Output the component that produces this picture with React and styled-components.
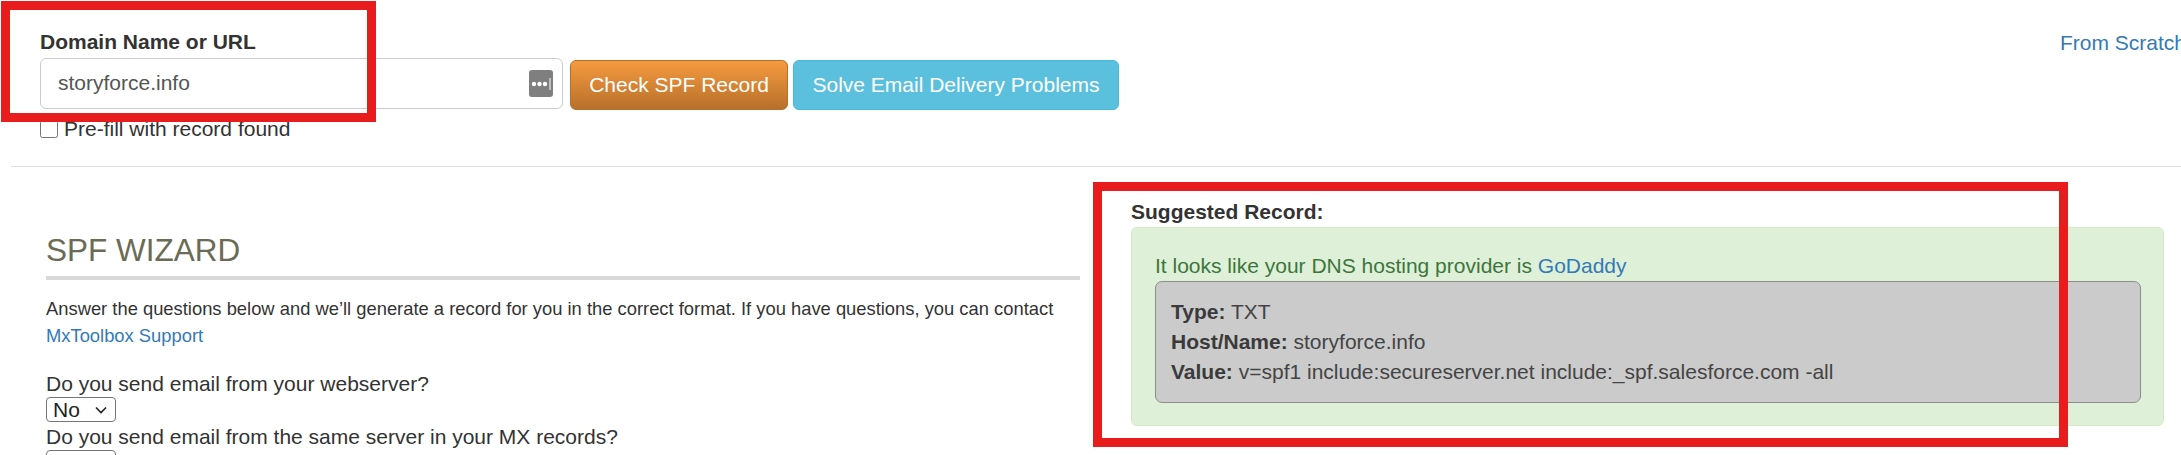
import styled, { createGlobalStyle } from 'styled-components';

const GlobalStyle = createGlobalStyle`
  html, body {
    margin: 0;
    padding: 0;
    background: #fff;
    overflow: hidden;
  }
  body {
    font-family: "Liberation Sans", Arial, sans-serif;
    color: #333;
  }
`;

const Page = styled.div`
  position: relative;
  width: 2181px;
  height: 455px;
  overflow: hidden;
`;

const TopRow = styled.div`
  display: flex;
  align-items: flex-start;
  height: 167px;
  padding: 32px 0 0 29px;
  box-sizing: border-box;
  border-bottom: 1px solid #ddd;
  margin-left: 11px;
`;

const Form = styled.form`
  width: 1079px;
  flex-shrink: 0;
`;

const FieldLabel = styled.label`
  display: block;
  font-size: 21px;
  line-height: 20px;
  font-weight: 700;
  margin-bottom: 6px;
`;

const FieldRow = styled.div`
  display: flex;
  align-items: flex-start;
  gap: 5px;
`;

const InputWrap = styled.div`
  position: relative;
  flex-shrink: 0;
  width: 523px;
  height: 51px;
  margin-right: 2px;
`;

const DomainInput = styled.input`
  width: 100%;
  height: 100%;
  box-sizing: border-box;
  padding: 0 17px 2px;
  border: 1px solid #ccc;
  border-radius: 6px;
  font: 21px "Liberation Sans", Arial, sans-serif;
  color: #555;
  outline: none;
`;

const PasswordIcon = styled.svg`
  position: absolute;
  top: 12px;
  right: 10px;
  width: 24px;
  height: 27px;
`;

const Button = styled.button`
  flex-shrink: 0;
  height: 50px;
  margin-top: 2px;
  box-sizing: border-box;
  border: 1px solid ${(p) => (p.$tone === 'orange' ? '#b5702a' : '#46b8da')};
  border-radius: 6px;
  background: ${(p) =>
    p.$tone === 'orange' ? 'linear-gradient(#f59a3f, #b8702b)' : '#5bc0de'};
  color: #fff;
  font: 21px "Liberation Sans", Arial, sans-serif;
  width: ${(p) => p.$width}px;
  padding: 0;
`;

const CheckRow = styled.label`
  display: flex;
  align-items: center;
  gap: 6px;
  margin-top: 8px;
  font-size: 21px;
  line-height: 22px;
`;

const CheckBox = styled.input`
  width: 18px;
  height: 18px;
  margin: 0;
`;

const TextLink = styled.a`
  color: #337ab7;
  text-decoration: none;
`;

const ScratchLink = styled(TextLink)`
  margin-left: 941px;
  flex-shrink: 0;
  font-size: 21px;
  line-height: 22px;
  white-space: nowrap;
`;

const Columns = styled.div`
  display: grid;
  grid-template-columns: 1034px 1033px;
  column-gap: 51px;
  padding-left: 46px;
`;

const Wizard = styled.section`
  padding-top: 67px;
`;

const WizardTitle = styled.h1`
  margin: 0 0 15px;
  padding-bottom: 10px;
  border-bottom: 4px solid #d9d9d9;
  font-size: 31.5px;
  line-height: 32px;
  font-weight: 400;
  color: #6b6b55;
`;

const Intro = styled.p`
  margin: 0 0 23px;
  font-size: 18.375px;
  line-height: 27px;
`;

const Question = styled.div`
  font-size: 21px;
  line-height: 24px;
`;

const AnswerSelect = styled.select`
  display: block;
  appearance: none;
  width: 70px;
  height: 25px;
  margin: 1px 0 3px;
  padding: 0 0 0 6px;
  font: 21px "Liberation Sans", Arial, sans-serif;
  color: #222;
  background: #fff url("data:image/svg+xml,%3Csvg xmlns='http://www.w3.org/2000/svg' width='12' height='8'%3E%3Cpath d='M1 1.5l5 5 5-5' fill='none' stroke='%23222' stroke-width='1.6'/%3E%3C/svg%3E") no-repeat right 8px center;
  border: 1px solid #767676;
  border-radius: 4px;
`;

const Suggestion = styled.section`
  padding-top: 35px;
`;

const SuggestionLabel = styled.div`
  font-size: 21px;
  line-height: 20px;
  font-weight: 700;
  margin-bottom: 5px;
`;

const SuccessAlert = styled.div`
  padding: 26px 22px 22px 23px;
  background: #dff0d8;
  border: 1px solid #d6e9c6;
  border-radius: 6px;
  color: #3c763d;
  font-size: 21px;
  line-height: 24px;
`;

const RecordBox = styled.div`
  margin-top: 3px;
  padding: 15px;
  background: #cbcbcb;
  border: 1px solid #8c8c8c;
  border-radius: 7px;
  color: #444;
`;

const RecordLine = styled.div`
  line-height: 30px;

  b {
    color: #3a3a3a;
  }
`;

const Callout = styled.div`
  position: absolute;
  box-sizing: border-box;
  left: ${(p) => p.$x}px;
  top: ${(p) => p.$y}px;
  width: ${(p) => p.$w}px;
  height: ${(p) => p.$h}px;
  border: 9px solid #e81c1c;
  pointer-events: none;
`;

export default function App() {
  return (
    <Page>
      <GlobalStyle />
      <TopRow>
        <Form onSubmit={(e) => e.preventDefault()}>
          <FieldLabel htmlFor="domain">Domain Name or URL</FieldLabel>
          <FieldRow>
            <InputWrap>
              <DomainInput id="domain" defaultValue="storyforce.info" />
              <PasswordIcon viewBox="0 0 24 27">
                <rect width="24" height="27" rx="3" fill="#7f7f7f" />
                <circle cx="5" cy="14" r="2.2" fill="#fff" />
                <circle cx="10.5" cy="14" r="2.2" fill="#fff" />
                <circle cx="16" cy="14" r="2.2" fill="#fff" />
                <rect x="20.5" y="8" width="1" height="12" fill="#fff" />
              </PasswordIcon>
            </InputWrap>
            <Button type="button" $tone="orange" $width={218}>Check SPF Record</Button>
            <Button type="button" $tone="blue" $width={326}>Solve Email Delivery Problems</Button>
          </FieldRow>
          <CheckRow>
            <CheckBox type="checkbox" />
            Pre-fill with record found
          </CheckRow>
        </Form>
        <ScratchLink href="#">From Scratch</ScratchLink>
      </TopRow>
      <Columns>
        <Wizard>
          <WizardTitle>SPF WIZARD</WizardTitle>
          <Intro>
            Answer the questions below and we’ll generate a record for you in the correct format. If you have questions, you can contact{' '}
            <TextLink href="#">MxToolbox Support</TextLink>
          </Intro>
          <Question>Do you send email from your webserver?</Question>
          <AnswerSelect defaultValue="No">
            <option>No</option>
            <option>Yes</option>
          </AnswerSelect>
          <Question>Do you send email from the same server in your MX records?</Question>
          <AnswerSelect defaultValue="No">
            <option>No</option>
            <option>Yes</option>
          </AnswerSelect>
        </Wizard>
        <Suggestion>
          <SuggestionLabel>Suggested Record:</SuggestionLabel>
          <SuccessAlert>
            It looks like your DNS hosting provider is <TextLink href="#">GoDaddy</TextLink>
            <RecordBox>
              <RecordLine><b>Type:</b> TXT</RecordLine>
              <RecordLine><b>Host/Name:</b> storyforce.info</RecordLine>
              <RecordLine><b>Value:</b> v=spf1 include:secureserver.net include:_spf.salesforce.com -all</RecordLine>
            </RecordBox>
          </SuccessAlert>
        </Suggestion>
      </Columns>
      <Callout $x={1} $y={1} $w={375} $h={121} />
      <Callout $x={1093} $y={182} $w={975} $h={265} />
    </Page>
  );
}
